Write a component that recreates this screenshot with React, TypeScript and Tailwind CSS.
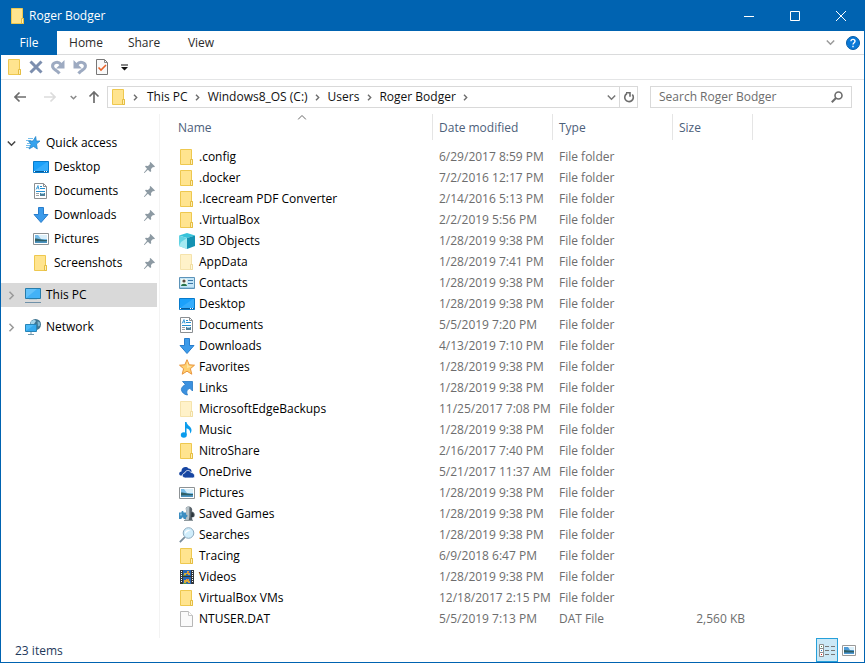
import { useState } from "react";
import type { ReactNode } from "react";

interface FileRow {
    name: string;
    icon: string;
    date: string;
    type?: string;
    size?: string;
}

const files: FileRow[] = [
    { name: ".config", icon: "folder", date: "6/29/2017 8:59 PM" },
    { name: ".docker", icon: "folder", date: "7/2/2016 12:17 PM" },
    { name: ".Icecream PDF Converter", icon: "folder", date: "2/14/2016 5:13 PM" },
    { name: ".VirtualBox", icon: "folder", date: "2/2/2019 5:56 PM" },
    { name: "3D Objects", icon: "cube", date: "1/28/2019 9:38 PM" },
    { name: "AppData", icon: "hidden", date: "1/28/2019 7:41 PM" },
    { name: "Contacts", icon: "contacts", date: "1/28/2019 9:38 PM" },
    { name: "Desktop", icon: "desktop", date: "1/28/2019 9:38 PM" },
    { name: "Documents", icon: "documents", date: "5/5/2019 7:20 PM" },
    { name: "Downloads", icon: "downloads", date: "4/13/2019 7:10 PM" },
    { name: "Favorites", icon: "star", date: "1/28/2019 9:38 PM" },
    { name: "Links", icon: "links", date: "1/28/2019 9:38 PM" },
    { name: "MicrosoftEdgeBackups", icon: "hidden", date: "11/25/2017 7:08 PM" },
    { name: "Music", icon: "music", date: "1/28/2019 9:38 PM" },
    { name: "NitroShare", icon: "folder", date: "2/16/2017 7:40 PM" },
    { name: "OneDrive", icon: "onedrive", date: "5/21/2017 11:37 AM" },
    { name: "Pictures", icon: "pictures", date: "1/28/2019 9:38 PM" },
    { name: "Saved Games", icon: "games", date: "1/28/2019 9:38 PM" },
    { name: "Searches", icon: "searches", date: "1/28/2019 9:38 PM" },
    { name: "Tracing", icon: "folder", date: "6/9/2018 6:47 PM" },
    { name: "Videos", icon: "videos", date: "1/28/2019 9:38 PM" },
    { name: "VirtualBox VMs", icon: "folder", date: "12/18/2017 2:15 PM" },
    { name: "NTUSER.DAT", icon: "file", date: "5/5/2019 7:13 PM", type: "DAT File", size: "2,560 KB" },
];

const quickAccess = [
    { name: "Desktop", icon: "desktop" },
    { name: "Documents", icon: "documents" },
    { name: "Downloads", icon: "downloads" },
    { name: "Pictures", icon: "pictures" },
    { name: "Screenshots", icon: "folder" },
];

const crumbs = ["This PC", "Windows8_OS (C:)", "Users", "Roger Bodger"];

// All item icons are drawn on a 16x16 grid
const icons: Record<string, ReactNode> = {
    folder: (
        <>
            <path d="M1.5.5h11v10h1v5h-12z" fill="#ffe48f" stroke="#eec84f" />
            <path d="M11.500 15.500v-5h2v5z" fill="#fff0b5" stroke="#e5bd42" />
        </>
    ),
    hidden: (
        <>
            <path d="M1.5.5h11v10h1v5h-12z" fill="#fff2c9" stroke="#f5e3ac" />
            <path d="M11.500 15.500v-5h2v5z" fill="#fff8de" stroke="#f0dda2" />
        </>
    ),
    cube: (
        <>
            <path d="M0 2.500 8 0l8 2.500L8 5z" fill="#36c3da" />
            <path d="M0 2.500 8 5v11l-8-3z" fill="#62d3e3" />
            <path d="M2 9l6-4v11l-8-3z" fill="#a5e9f1" />
            <path d="M8 5l8-2.500V13l-8 3z" fill="#1492b2" />
        </>
    ),
    contacts: (
        <>
            <path d="M.5 2.500h15v11H.5z" fill="#c5e6f8" stroke="#5c93b8" />
            <path d="M2 4h6v7H2z" fill="#eef8f2" />
            <circle cx="5" cy="6" r="1.600" fill="#5c4a40" />
            <path d="M2 11c0-3 6-3 6 0z" fill="#26734d" />
            <path d="M9 5.500h5M9 8.500h5" stroke="#3976a5" />
            <path d="M1 12.500h14" stroke="#9fcae3" />
        </>
    ),
    desktop: (
        <>
            <path d="M.5 2.500h15v11H.5z" fill="#1ba1fa" stroke="#087bcb" />
            <path d="M1 12 14 3h1v9z" fill="#35adfc" />
            <path d="M1 12.500h14" stroke="#075b98" />
            <path d="M1 12.500h1M11 12.500h1M13 12.500h1" stroke="#fff" />
        </>
    ),
    documents: (
        <>
            <path d="M1.500.5h9l3 3v12h-12z" fill="#fff" stroke="#8b8f92" />
            <path d="M10.500.5v3h3" fill="none" stroke="#8b8f92" />
            <path d="m3 6.500 2-4 1 4M4 5h2" fill="none" stroke="#258fd0" strokeWidth=".8" />
            <path d="M7 3.500h2M7 5.500h5M3 8.500h9" fill="none" stroke="#258fd0" />
            <path d="M3 10.500h3M3 12.500h3" stroke="#9aa1a5" />
            <path d="M7 10h5v3H7z" fill="#50819b" />
            <path d="M8 10h3v1H8z" fill="#9cd2ed" />
        </>
    ),
    downloads: <path d="M5.500.5h5v7h4.500l-7 8-7-8h4.500z" fill="#3c9bea" stroke="#287dcc" />,
    star: (
        <>
            <path
                d="m8 .7 2.200 5.100 5.300.4-4.100 3.500 1.400 5.500L8 12.200l-4.800 3 1.400-5.500L.5 6.200l5.300-.4z"
                fill="#ffd071"
                stroke="#e8943c"
            />
            <path d="m8 2 1.500 4.700 3.500.5-5 2z" fill="#ffe4a0" />
        </>
    ),
    links: (
        <path
            d="M3.500 1.500h10v9.500L10.800 8.300C8 9.300 7 11.800 8.500 15 4 14.500 1 10 3 7.500 4 6 5 5.300 6.500 4.500z"
            fill="#3c91df"
            stroke="#2478c5"
            strokeWidth=".8"
        />
    ),
    music: (
        <>
            <path d="M6 0h1.500c.5 3.500 5 4.500 5 8 0 1.500-.5 2.500-1.500 3.500.5-3-1-4.500-3.500-5.200V13H6z" fill="#0a9ced" />
            <ellipse cx="4.800" cy="13" rx="3" ry="2.700" fill="#0a9ced" />
        </>
    ),
    onedrive: (
        <>
            <path d="M2 11.500C-.5 11.500-.5 7.500 2.500 7.500 2 3.500 7 1.500 9.500 4.500c2 0 3 1 3 3v4z" fill="#1746a2" />
            <path
                d="M6.500 14c-4 0-4-4.500-.8-5 .8-3 5-3.500 6.200-.5 4 0 5.200 5.500 1.600 5.500z"
                fill="#1746a2"
                stroke="#fff"
                strokeWidth=".8"
            />
        </>
    ),
    pictures: (
        <>
            <path d="M.5 2.500h15v11H.5z" fill="#fff" stroke="#8d9295" />
            <path d="M2 4h12v8H2z" fill="#78bce8" />
            <path d="M5 4h9v4H8z" fill="#d9effa" />
            <path d="M2 7.500c4 0 6 1.500 12 1.500v2H2z" fill="#2f5f66" />
            <path d="M2 10.500c5-1 8 .5 12-.500v2H2z" fill="#4b93c0" />
        </>
    ),
    games: (
        <>
            <path d="M9.500.5c3 0 4.500 2.500 3.300 4.800 3.200 1 3.500 4 2.200 5.700l-2 .5.500 3h-8l2-4V5C6 2.500 7 .5 9.500.5z" fill="#59636a" />
            <path d="M9.500.5C7 .5 6 3 7.500 5.200V11l-2 3.500h4c1.500-4 .5-8 1-14z" fill="#b6c2c8" />
            <path d="M12.500 6c2.500 1 3 3 1.500 5h-2z" fill="#2d363b" />
            <path d="M0 6.500h2.500c-.5-2 2.500-2 2 0H7v2.300c2-.3 2 2.400 0 2.200V13H4.500c.5-2-2-2-2 0H0z" fill="#3d8dc0" />
            <path d="M1 7.500h2v2H1z" fill="#77bce3" />
            <path d="M5 14.500h9" stroke="#8f999e" />
        </>
    ),
    searches: (
        <>
            <path d="m.8 15.200 5-5" stroke="#788c9a" strokeWidth="1.800" />
            <circle cx="9.500" cy="6" r="5.300" fill="#d0edfb" stroke="#8eacc0" />
            <path d="M6 7c-.5-3.500 3-5 6-3.500-2.500 0-4 1.500-6 3.500z" fill="#fff" />
        </>
    ),
    videos: (
        <>
            <path d="M1 1h14v14H1z" fill="#34383b" />
            <path d="M4 1h8v6H4zM4 8h8v7H4z" fill="#2866b6" />
            <path d="M5 4h3V2h2v2h1v2H9V5H7v1H5zM5 11h2v-1h3v2h1v2H9v-1H7v1H5z" fill="#d9a93c" />
            <path d="M4 6h3v1H4zM4 14h4v1H4z" fill="#599345" />
            <path d="M9 3h1v1H9zM8 10h1v1H8z" fill="#e45643" />
            <path d="M2.500 2v12M13.500 2v12" stroke="#fff" strokeDasharray="1 1" />
        </>
    ),
    file: (
        <>
            <path d="M1.500.5h8l4 4v11h-12z" fill="#fafafa" stroke="#b7b7b7" />
            <path d="M9.500.5v4h4" fill="#fff" stroke="#c5c5c5" />
        </>
    ),
    quick: (
        <>
            <path d="M3 3.500h5M1 5.500h5M2 8.500h4M1 10.500h4M1 12.500h3" stroke="#75bdea" />
            <path d="M10.700 1.500 11.300 6H15l-3.500 3 .8 5-3.800-2.500L4 14l2-4.800L3.500 6H8z" fill="#36a3ee" stroke="#1e7fc4" strokeWidth=".7" />
        </>
    ),
    pc: (
        <>
            <path d="M.5 1.500h15v10H.5z" fill="#63c2fa" stroke="#277caa" />
            <path d="M1 11 12 2h3v9z" fill="#43b2f7" />
            <path d="M4 12.500h8" stroke="#b5cfdb" />
            <path d="M0 15.500h16" stroke="#6f91a8" />
        </>
    ),
    network: (
        <>
            <circle cx="10.500" cy="5.500" r="5.500" fill="#3f7592" />
            <path d="M6 2.500C8 .5 10 .5 11 2L9 5 5.500 5z" fill="#a5d3e8" />
            <path d="M12.500 2.500c2 0 3 1.500 2.500 4l-2 1z" fill="#7fb6d0" />
            <path d="M.5 5.500h11v7H.5z" fill="#4bbaf8" stroke="#2784b7" />
            <path d="M1 12 9 6h2v6z" fill="#35a9ee" />
            <path d="M6 13v2M3 15.500h6" stroke="#7298ad" />
        </>
    ),
};

function ItemIcon({ name }: { name: string }) {
    return (
        <svg className="size-4 shrink-0" viewBox="0 0 16 16" aria-hidden="true">
            {icons[name]}
        </svg>
    );
}

function Chevron({ className, down }: { className: string; down?: boolean }) {
    return (
        <svg className={`size-[9px] shrink-0 ${className}`} viewBox="0 0 9 9" fill="none" stroke="currentColor" aria-hidden="true">
            <path d={down ? "M.8 2.500 4.500 6.200 8.200 2.500" : "M2.500.8 6.200 4.500 2.500 8.200"} strokeWidth="1.500" />
        </svg>
    );
}

// Smaller chevron used between the address bar parts
function CrumbChevron() {
    return (
        <svg className="size-[7px] shrink-0" viewBox="0 0 7 7" fill="none" stroke="#6d6d6d" aria-hidden="true">
            <path d="M2 .8 4.700 3.500 2 6.200" strokeWidth="1.400" />
        </svg>
    );
}

function Pin() {
    return (
        <svg className="size-[11px] shrink-0" viewBox="0 0 11 11" aria-hidden="true">
            <path d="M6.500 0 11 4.500l-1 .8-1-.3-2 2 .2 2.200-1 .8-2.300-2.300L.5 11H0v-.5l3-3.700L1 4.600l.8-.9L4 4l2-2-.3-1.200z" fill="#8d9aa3" />
        </svg>
    );
}

function TitleBar() {
    return (
        <header className="flex h-[31px] items-center bg-[#0063b1] text-white">
            <div className="flex flex-1 items-center gap-[3px] pl-[9px]">
                <ItemIcon name="folder" />
                <h1>Roger Bodger</h1>
            </div>
            <button aria-label="Minimize" className="flex h-full w-[46px] items-center justify-center">
                <svg className="size-[10px]" viewBox="0 0 10 10" stroke="currentColor"><path d="M0 5.500h10" /></svg>
            </button>
            <button aria-label="Maximize" className="flex h-full w-[46px] items-center justify-center">
                <svg className="size-[10px]" viewBox="0 0 10 10" fill="none" stroke="currentColor"><path d="M.5.5h9v9h-9z" /></svg>
            </button>
            <button aria-label="Close" className="flex h-full w-[46px] items-center justify-center">
                <svg className="size-[10px]" viewBox="0 0 10 10" stroke="currentColor"><path d="m0 0 10 10M10 0 0 10" /></svg>
            </button>
        </header>
    );
}

function Ribbon() {
    return (
        <div className="flex h-6 items-stretch border-b border-[#dadbdc] text-[#2b2b2b]">
            <button className="-mb-px w-14 bg-[#0063b1] text-white">File</button>
            <button className="w-[58px]">Home</button>
            <button className="w-[58px]">Share</button>
            <button className="w-[56px]">View</button>
            <div className="ml-auto flex items-center gap-[11px] pr-1">
                <button aria-label="Expand the ribbon" className="flex h-full items-center text-[#9a9a9a]">
                    <Chevron className="" down />
                </button>
                <button aria-label="Help" className="flex h-full items-center">
                    <svg className="size-[14px]" viewBox="0 0 14 14" fill="none">
                        <circle cx="7" cy="7" r="6.500" fill="#0878d7" stroke="#075ca5" />
                        <path d="M5 5.200c0-2.600 4-2.200 4 0C9 6.700 7 6.700 7 8.500M7 9.800v1.500" stroke="#fff" strokeWidth="1.400" />
                    </svg>
                </button>
            </div>
        </div>
    );
}

function QuickToolbar() {
    return (
        <div className="flex h-[25px] items-center gap-[6px] border-b border-[#e4e5e6] pl-[6px]">
            <button aria-label="New folder"><ItemIcon name="folder" /></button>
            <button aria-label="Delete">
                <svg className="size-4" viewBox="0 0 16 16" fill="none" stroke="#7c8eae" strokeWidth="3">
                    <path d="m1.500 2.500 11 11M12.500 2.500l-11 11" />
                </svg>
            </button>
            <button aria-label="Redo">
                <svg className="size-4" viewBox="0 0 16 16" fill="none">
                    <path d="M10 5.500C7 1.500.5 3.500 1.800 8.300c1 2.800 3.500 2.200 6.700 6.200" stroke="#9daac1" strokeWidth="3" />
                    <path d="M13.500 1v8.500H5z" fill="#9daac1" />
                </svg>
            </button>
            <button aria-label="Undo">
                <svg className="size-4" viewBox="0 0 16 16" fill="none">
                    <path d="M4 5.500c3-4 9.500-2 8.200 2.800-1 2.800-3.500 2.200-6.700 6.200" stroke="#9daac1" strokeWidth="3" />
                    <path d="M.5 1v8.500H9z" fill="#9daac1" />
                </svg>
            </button>
            <button aria-label="Properties">
                <svg className="size-4" viewBox="0 0 16 16" fill="none">
                    <path d="M1.500.5h8l3 3v12h-11z" fill="#f9f9f9" stroke="#777" />
                    <path d="M9.500.5v3h3" stroke="#888" />
                    <path d="m3.500 8.500 2.500 2.500 5-5" stroke="#e7642b" strokeWidth="1.600" />
                </svg>
            </button>
            <button aria-label="Customize Quick Access Toolbar">
                <svg className="size-4" viewBox="0 0 16 16"><path d="M4 5.500h7v1H4zM4 8h7l-3.500 3.500z" fill="#111" /></svg>
            </button>
        </div>
    );
}

function Arrow({ className }: { className: string }) {
    return (
        <svg className={`size-3 ${className}`} viewBox="0 0 12 12" fill="none" stroke="currentColor" strokeWidth="1.700">
            <path d="M12 6H1M5.500 1.500 1 6l4.500 4.500" />
        </svg>
    );
}

function AddressRow() {
    return (
        <div className="flex h-[34px] items-center pr-3 pl-[13px]">
            <button aria-label="Back" className="w-[30px] text-[#6d6d6d]"><Arrow className="" /></button>
            <button aria-label="Forward" className="w-[26px] text-[#dcdcdc]"><Arrow className="rotate-180" /></button>
            <button aria-label="Recent locations" className="flex w-[18px] items-center text-[#8a8a8a]">
                <svg className="size-[7px]" viewBox="0 0 7 7" fill="none" stroke="currentColor" strokeWidth="1.500"><path d="m.7 2 2.800 2.800L6.300 2" /></svg>
            </button>
            <button aria-label="Up" className="w-[19px] text-[#6d6d6d]"><Arrow className="rotate-90" /></button>
            <div className="flex h-[22px] flex-1 items-center border border-[#d9d9d9]">
                <div className="flex flex-1 items-center pl-[3px] text-[#111]">
                    <ItemIcon name="folder" />
                    <span className="flex w-5 justify-center pr-1"><CrumbChevron /></span>
                    {crumbs.map((crumb) => (
                        <div key={crumb} className="flex items-center">
                            <a href="#">{crumb}</a>
                            <span className="flex w-5 justify-center"><CrumbChevron /></span>
                        </div>
                    ))}
                </div>
                <button aria-label="Previous locations" className="px-[3px] text-[#777]"><Chevron className="" down /></button>
                <button aria-label="Refresh" className="flex h-full w-[18px] items-center justify-center border-l border-[#d9d9d9]">
                    <svg className="size-3" viewBox="0 0 12 12" fill="none" stroke="#6d6d6d" strokeWidth="1.600">
                        <path d="M9.300 3.500A4.300 4.300 0 1 1 4 2.500" />
                        <path d="M3 1.800h4v4" />
                    </svg>
                </button>
            </div>
            <div className="ml-3 flex h-[22px] w-[202px] items-center border border-[#d9d9d9] pr-2 pl-2">
                <input
                    aria-label="Search Roger Bodger"
                    placeholder="Search Roger Bodger"
                    className="min-w-0 flex-1 outline-none placeholder:text-[#6d6d6d]"
                />
                <svg className="size-3 shrink-0" viewBox="0 0 12 12" fill="none" stroke="#6d6d6d" aria-hidden="true">
                    <circle cx="7.500" cy="4.500" r="3.500" strokeWidth="1.600" />
                    <path d="M5 7 .8 11.200" strokeWidth="2" />
                </svg>
            </div>
        </div>
    );
}

function Sidebar() {
    return (
        <nav aria-label="Navigation pane" className="w-[159px] shrink-0 border-r border-[#f3f3f3] pt-[17px]">
            <a href="#" className="flex h-6 items-center pl-[6px]">
                <Chevron className="text-[#444]" down />
                <span className="ml-[9px] mr-[5px]"><ItemIcon name="quick" /></span>
                Quick access
            </a>
            {quickAccess.map((item) => (
                <a key={item.name} href="#" className="flex h-6 items-center gap-[5px] pr-[4px] pl-8">
                    <ItemIcon name={item.icon} />
                    <span className="flex-1">{item.name}</span>
                    <Pin />
                </a>
            ))}
            <a href="#" className="mt-2 mr-[2px] flex h-6 items-center bg-[#d9d9d9] pl-[6px]">
                <Chevron className="text-[#999]" />
                <span className="ml-[9px] mr-[5px]"><ItemIcon name="pc" /></span>
                This PC
            </a>
            <a href="#" className="mt-2 flex h-6 items-center pl-[6px]">
                <Chevron className="text-[#999]" />
                <span className="ml-[9px] mr-[5px]"><ItemIcon name="network" /></span>
                Network
            </a>
        </nav>
    );
}

function FileTable() {
    return (
        <div className="min-w-0 flex-1">
            <table className="w-full table-fixed border-collapse text-left text-[#6d6d6d]">
                <colgroup>
                    <col className="w-[273px]" />
                    <col className="w-[120px]" />
                    <col className="w-[120px]" />
                    <col className="w-[80px]" />
                    <col />
                </colgroup>
                <thead className="text-[#4c607a]">
                    <tr>
                        <th className="pb-[6px] pl-3 font-normal">
                            <button className="relative flex h-[26px] w-full items-center border-r border-[#e5e5e5] pt-[2px] pl-[6px]">
                                <svg className="absolute top-px left-1/2 h-[5px] w-[9px] -translate-x-1/2" viewBox="0 0 9 5" fill="none" stroke="#666">
                                    <path d="M.5 4.500l4-4 4 4" />
                                </svg>
                                Name
                            </button>
                        </th>
                        {["Date modified", "Type", "Size"].map((label) => (
                            <th key={label} className="pb-[6px] font-normal">
                                <button className="flex h-[26px] w-full items-center border-r border-[#e5e5e5] pt-[2px] pl-[6px]">
                                    {label}
                                </button>
                            </th>
                        ))}
                        <td />
                    </tr>
                </thead>
                <tbody>
                    {files.map((file) => (
                        <tr key={file.name} className="h-[21px] whitespace-nowrap">
                            <td className="pl-[19px] text-black">
                                <div className="flex items-center gap-1">
                                    <ItemIcon name={file.icon} />
                                    {file.name}
                                </div>
                            </td>
                            <td className="pl-[6px]">{file.date}</td>
                            <td className="pl-[6px]">{file.type ?? "File folder"}</td>
                            <td className="pr-2 text-right">{file.size}</td>
                            <td />
                        </tr>
                    ))}
                </tbody>
            </table>
        </div>
    );
}

function StatusBar({ view, setView }: { view: string; setView: (view: string) => void }) {
    const active = "border-[#26a0da] bg-[#cbe8f6]";
    return (
        <footer className="flex h-6 items-center pr-1 pl-[14px] text-[#1e395b]">
            <span className="flex-1 pt-px">{files.length} items</span>
            <button
                aria-label="Details view"
                onClick={() => setView("details")}
                className={`flex h-full w-[22px] items-center justify-center border ${view === "details" ? active : "border-transparent"}`}
            >
                <svg className="h-[13px] w-4" viewBox="0 0 16 13" fill="none">
                    <path d="M.5.5h4v4h-4zM.5 4.500h4v4h-4zM.5 8.500h4v4h-4z" fill="#fff" stroke="#8d8d8d" />
                    <path d="M6 2.500h4M12 2.500h4M6 6.500h4M12 6.500h4M6 10.500h4M12 10.500h4" stroke="#777" />
                    <path d="M2 2h1v1H2z" fill="#3c8b48" />
                    <path d="M2 6h1v1H2z" fill="#267cca" />
                    <path d="M2 10h1v1H2z" fill="#d32020" />
                </svg>
            </button>
            <button
                aria-label="Large icons view"
                onClick={() => setView("large")}
                className={`flex h-full w-[22px] items-center justify-center border ${view === "large" ? active : "border-transparent"}`}
            >
                <svg className="h-[11px] w-[14px]" viewBox="0 0 14 11">
                    <path d="M.5.500h13v10H.5z" fill="#fff" stroke="#999" />
                    <path d="M2 2h10v7H2z" fill="#4f9bd6" />
                    <path d="M6 2h6v3H8z" fill="#d9effa" />
                    <path d="M2 5c3 0 6 1 10 1v1.500H2z" fill="#2f5f66" />
                </svg>
            </button>
        </footer>
    );
}

function App() {
    const [view, setView] = useState("details");

    return (
        <div className="flex min-h-screen flex-col border-x border-b border-[#0063b1] bg-white font-['Open_Sans',sans-serif] text-[12px] leading-4 text-black">
            <TitleBar />
            <Ribbon />
            <QuickToolbar />
            <AddressRow />
            <main className="flex flex-1">
                <Sidebar />
                <FileTable />
            </main>
            <StatusBar view={view} setView={setView} />
        </div>
    );
}

export default App;
